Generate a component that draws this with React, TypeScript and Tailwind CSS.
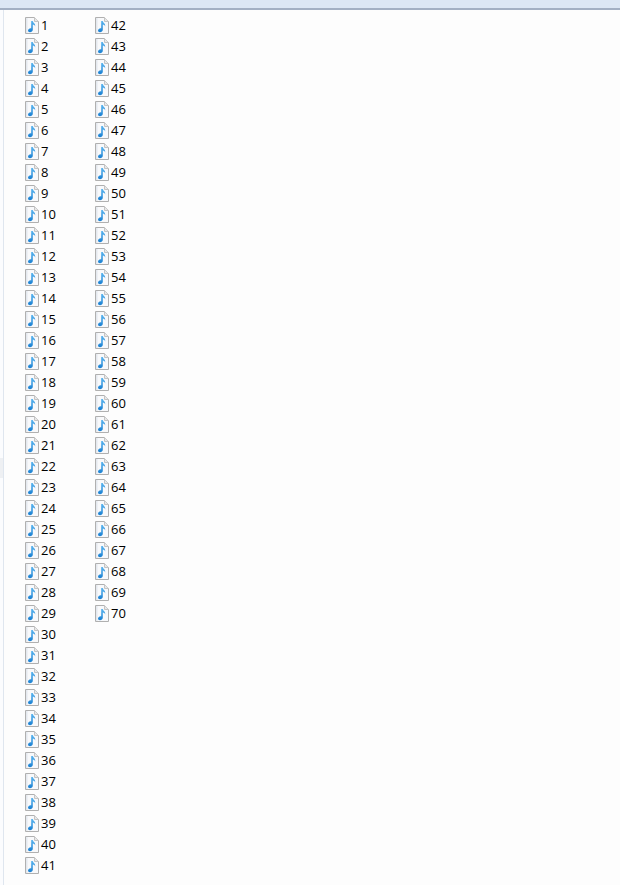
const numbers = Array.from({ length: 70 }, (_, i) => i + 1);

function AudioFileIcon() {
  return (
    <svg width="14" height="17" viewBox="0 0 14 17" className="shrink-0" aria-hidden="true">
      <defs>
        <linearGradient id="note-blue" x1="0" y1="0" x2="0" y2="1">
          <stop offset="0" stopColor="#5ab4ee" />
          <stop offset="1" stopColor="#1a80d2" />
        </linearGradient>
      </defs>
      <path d="M0.5 0.5H9.5L13.5 4.5V16.5H0.5Z" fill="#f8f9fb" stroke="#b0b0b0" />
      <path d="M9.5 0.5V4.5H13.5" fill="#e8e8e8" stroke="#c4c4c4" />
      <path d="M1 1H2.5V16H1Z" fill="#e3e8ee" />
      <path d="M6.2 4H7.8C8 5.8 10.6 6.4 10.2 9.4C9.7 8.3 8.8 7.8 7.8 7.6V12.8C7.8 14.3 6.4 15.2 5 15.2C3.8 15.2 3 14.5 3 13.6C3 12.3 4.4 11.3 5.5 11.3C5.8 11.3 6 11.4 6.2 11.5Z" fill="url(#note-blue)" />
    </svg>
  );
}

export default function App() {
  return (
    <div className="w-[620px] h-[885px] overflow-hidden flex flex-col bg-[#fdfdfd] font-['Open_Sans','Noto_Sans',sans-serif] text-[13px] font-[450] text-black">
      {/* Top bar */}
      <div className="h-[10px] shrink-0 bg-[#dce7f5] border-b-2 border-[#a3b0c4]" />

      <div className="flex flex-1 min-h-0">
        {/* Left pane edge */}
        <div className="w-[4px] shrink-0 bg-[#fbfcfe] border-r border-[#dfe6ef]">
          <div className="w-[3px] h-[20px] mt-[448px] bg-[#eef0f3]" />
        </div>

        {/* File list */}
        <div className="pl-[21px] pt-[5px] grid grid-flow-col grid-rows-[repeat(41,21px)] auto-cols-[70px]">
          {numbers.map((n) => (
            <div key={n} className="flex items-center gap-[2px] h-[21px]">
              <AudioFileIcon />
              <span className="leading-none">{n}</span>
            </div>
          ))}
        </div>
      </div>
    </div>
  );
}
